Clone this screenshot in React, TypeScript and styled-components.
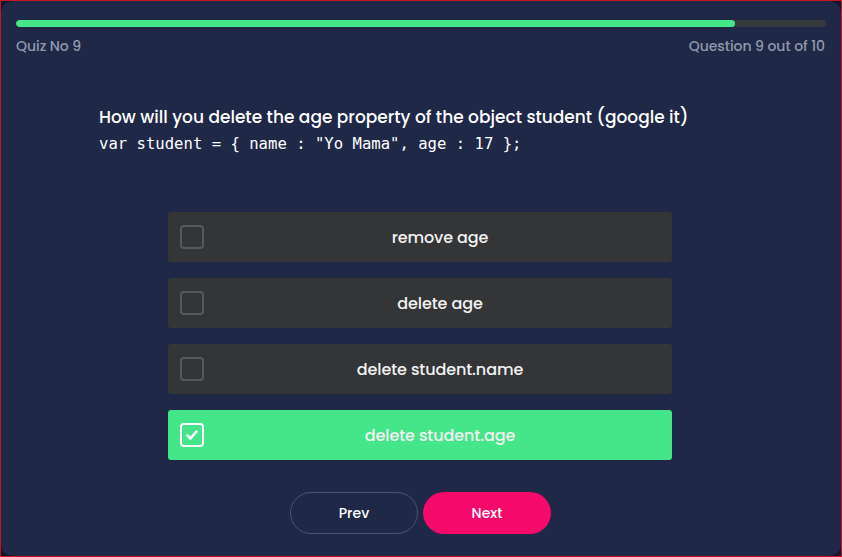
import React, { useState } from "react";
import styled, { createGlobalStyle } from "styled-components";

const GlobalStyle = createGlobalStyle`
  html, body {
    margin: 0;
    padding: 0;
    background: #12172e;
  }
  * { box-sizing: border-box; }
`;

const options = ["remove age", "delete age", "delete student.name", "delete student.age"];

export default function App() {
  const [selected, setSelected] = useState(3);

  return (
    <>
      <GlobalStyle />
      <Frame>
        <Card>
          <ProgressTrack>
            <ProgressFill style={{ width: `${(9 / 10) * 100 - 1.2}%` }} />
          </ProgressTrack>
          <MetaRow>
            <span>Quiz No 9</span>
            <span>Question 9 out of 10</span>
          </MetaRow>

          <QuestionBlock>
            <QuestionText>How will you delete the age property of the object student (google it)</QuestionText>
            <Code>var student = {"{"} name : "Yo Mama", age : 17 {"};"}</Code>
          </QuestionBlock>

          <OptionList>
            {options.map((opt, i) => (
              <Option key={opt} $active={selected === i} onClick={() => setSelected(i)}>
                <Check $active={selected === i}>
                  {selected === i && (
                    <svg width="16" height="16" viewBox="0 0 16 16" fill="none">
                      <path d="M3.5 8.5l3 3 6-7" stroke="#fff" strokeWidth="2.6" strokeLinecap="round" strokeLinejoin="round" />
                    </svg>
                  )}
                </Check>
                <OptionLabel>{opt}</OptionLabel>
              </Option>
            ))}
          </OptionList>

          <Buttons>
            <PrevButton>Prev</PrevButton>
            <NextButton>Next</NextButton>
          </Buttons>
        </Card>
      </Frame>
    </>
  );
}

const Frame = styled.div`
  height: 557px;
  border: 1px solid #c8141e;
  display: flex;
`;

const Card = styled.div`
  flex: 1;
  background: #1f2846;
  border-radius: 12px;
  padding: 19px 15px 0 15px;
  font-family: "Poppins", "Open Sans", sans-serif;
  display: flex;
  flex-direction: column;
`;

const ProgressTrack = styled.div`
  height: 7px;
  border-radius: 4px;
  background: #363a3c;
  overflow: hidden;
`;

const ProgressFill = styled.div`
  height: 100%;
  border-radius: 4px;
  background: #45e68a;
`;

const MetaRow = styled.div`
  display: flex;
  justify-content: space-between;
  margin-top: 9px;
  padding-right: 1px;
  font-size: 14px;
  font-weight: 500;
  color: #9198ad;
  letter-spacing: -0.05px;
`;

const QuestionBlock = styled.div`
  margin: 47px 0 0 83px;
`;

const QuestionText = styled.div`
  font-size: 17px;
  font-weight: 500;
  color: #ffffff;
  letter-spacing: 0;
`;

const Code = styled.div`
  margin-top: 5px;
  font-family: "DejaVu Sans Mono", monospace;
  font-size: 15.6px;
  color: #ffffff;
`;

const OptionList = styled.div`
  display: flex;
  flex-direction: column;
  gap: 16px;
  width: 504px;
  margin: 59px auto 0;
  position: relative;
  left: -1px;
`;

const Option = styled.div<{ $active: boolean }>`
  height: 50px;
  border-radius: 3px;
  background: ${(p) => (p.$active ? "#45e68a" : "#333537")};
  display: flex;
  align-items: center;
  padding: 0 12px;
  cursor: pointer;
`;

const Check = styled.div<{ $active: boolean }>`
  width: 24px;
  height: 24px;
  border-radius: 4px;
  border: 2px solid ${(p) => (p.$active ? "#ffffff" : "#56595c")};
  display: flex;
  align-items: center;
  justify-content: center;
  flex-shrink: 0;
`;

const OptionLabel = styled.div`
  flex: 1;
  text-align: center;
  padding-left: 16px;
  font-size: 16px;
  font-weight: 500;
  color: #f2f2f2;
  letter-spacing: -0.1px;
`;

const Buttons = styled.div`
  display: flex;
  justify-content: center;
  gap: 5px;
  margin-top: 32px;
  margin-right: 1px;
`;

const PrevButton = styled.button`
  width: 128px;
  height: 42px;
  border-radius: 21px;
  border: 1px solid #4a5170;
  background: transparent;
  color: #ffffff;
  font-family: "Poppins", "Open Sans", sans-serif;
  font-size: 14px;
  font-weight: 500;
  cursor: pointer;
`;

const NextButton = styled(PrevButton)`
  border: none;
  background: #f5096b;
`;
